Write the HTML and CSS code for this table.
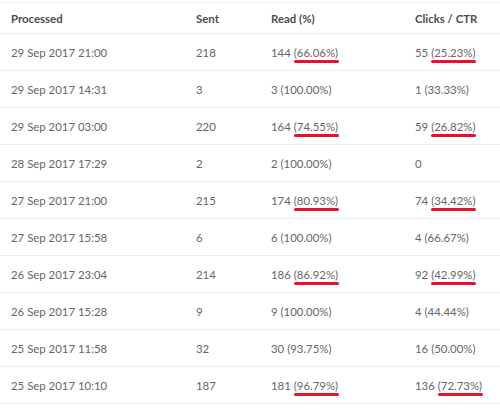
FILE: index.html
```html
<!DOCTYPE html>
<html>
<head>
<meta charset="utf-8">
<link rel="stylesheet" href="styles.css">
</head>
<body>
<table class="report">
  <thead>
    <tr><th class="c1">Processed</th><th class="c2">Sent</th><th class="c3">Read (%)</th><th class="c4">Clicks / CTR</th></tr>
  </thead>
  <tbody>
    <tr><td>29 Sep 2017 21:00</td><td>218</td><td>144 <span class="mark">(66.06%)</span></td><td>55 <span class="mark">(25.23%)</span></td></tr>
    <tr><td>29 Sep 2017 14:31</td><td>3</td><td>3 (100.00%)</td><td>1 (33.33%)</td></tr>
    <tr><td>29 Sep 2017 03:00</td><td>220</td><td>164 <span class="mark">(74.55%)</span></td><td>59 <span class="mark">(26.82%)</span></td></tr>
    <tr><td>28 Sep 2017 17:29</td><td>2</td><td>2 (100.00%)</td><td>0</td></tr>
    <tr><td>27 Sep 2017 21:00</td><td>215</td><td>174 <span class="mark">(80.93%)</span></td><td>74 <span class="mark">(34.42%)</span></td></tr>
    <tr><td>27 Sep 2017 15:58</td><td>6</td><td>6 (100.00%)</td><td>4 (66.67%)</td></tr>
    <tr><td>26 Sep 2017 23:04</td><td>214</td><td>186 <span class="mark">(86.92%)</span></td><td>92 <span class="mark">(42.99%)</span></td></tr>
    <tr><td>26 Sep 2017 15:28</td><td>9</td><td>9 (100.00%)</td><td>4 (44.44%)</td></tr>
    <tr><td>25 Sep 2017 11:58</td><td>32</td><td>30 (93.75%)</td><td>16 (50.00%)</td></tr>
    <tr><td>25 Sep 2017 10:10</td><td>187</td><td>181 <span class="mark">(96.79%)</span></td><td>136 <span class="mark">(72.73%)</span></td></tr>
  </tbody>
</table>
</body>
</html>
```
FILE: styles.css
```css
html, body {
  margin: 0;
  padding: 0;
  background: #ffffff;
}
body {
  font-family: Lato, "Liberation Sans", sans-serif;
  font-size: 11.4px;
  color: #666666;
}
.report {
  width: 500px;
  border-collapse: collapse;
  table-layout: fixed;
  margin-top: 2px;
  border-top: 1px solid #f0f0f0;
}
.report th, .report td {
  text-align: left;
  padding: 0 0 0 11px;
  border-bottom: 1px solid #ececec;
  white-space: nowrap;
}
.report th {
  height: 30px;
  font-weight: 700;
  color: #4d4d4d;
}
.report td {
  height: 36px;
}
.c1 { width: 174px; }
.c2 { width: 64px; }
.c3 { width: 133px; }
.c4 { width: auto; }
.mark {
  position: relative;
}
.mark::after {
  content: "";
  position: absolute;
  left: 0;
  right: -1px;
  bottom: -4px;
  height: 2.5px;
  border-radius: 1.5px;
  background: #e8102c;
}
```
